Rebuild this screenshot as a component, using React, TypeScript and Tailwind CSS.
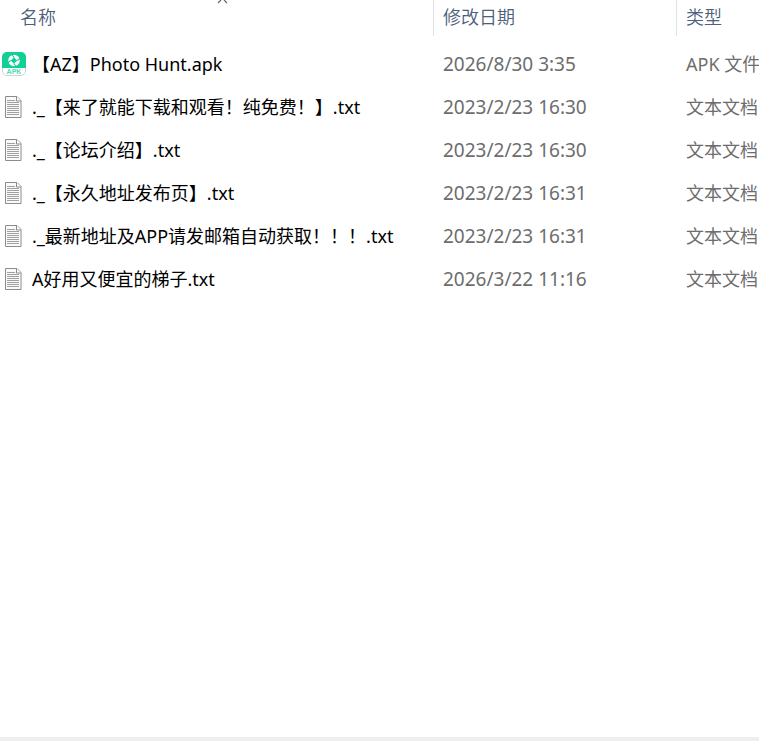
import type { ReactNode } from 'react';

interface FileEntry {
  name: string;
  modified: string;
  type: string;
  kind: 'apk' | 'txt';
}

const files: FileEntry[] = [
  { name: '【AZ】Photo Hunt.apk', modified: '2026/8/30 3:35', type: 'APK 文件', kind: 'apk' },
  { name: '._【来了就能下载和观看！纯免费！】.txt', modified: '2023/2/23 16:30', type: '文本文档', kind: 'txt' },
  { name: '._【论坛介绍】.txt', modified: '2023/2/23 16:30', type: '文本文档', kind: 'txt' },
  { name: '._【永久地址发布页】.txt', modified: '2023/2/23 16:31', type: '文本文档', kind: 'txt' },
  { name: '._最新地址及APP请发邮箱自动获取！！！.txt', modified: '2023/2/23 16:31', type: '文本文档', kind: 'txt' },
  { name: 'A好用又便宜的梯子.txt', modified: '2026/3/22 11:16', type: '文本文档', kind: 'txt' },
];

function ApkIcon() {
  return (
    <svg width="24" height="24" viewBox="0 0 24 24" className="shrink-0" aria-hidden="true">
      <rect x="0.5" y="0.5" width="23" height="23" rx="4.5" fill="#fff" stroke="#c9d6d1" />
      <path d="M5 0h14a5 5 0 0 1 5 5v11H0V5a5 5 0 0 1 5-5z" fill="#12cf96" />
      <circle cx="12" cy="8.5" r="5.8" fill="#fff" />
      <path d="M12 4.8l1.5 2.2 2.2 1.5-2.2 1.5L12 12.2l-1.5-2.2L8.3 8.5l2.2-1.5z" fill="#12cf96" />
      <path d="M12 5L9.5 2.2M15.5 8.5l2.8-2.5M12 12l2.5 2.8M8.5 8.5l-2.8 2.5" stroke="#12cf96" strokeWidth="1.1" />
      <text x="12" y="22" textAnchor="middle" fontSize="7" fontWeight="700" fill="#4fdab2" fontFamily="Liberation Sans, sans-serif">
        APK
      </text>
    </svg>
  );
}

function TextIcon() {
  return (
    <svg width="18" height="22" viewBox="0 0 18 22" className="mr-1 ml-[2px] shrink-0" aria-hidden="true">
      <path d="M1.5 0.5h11.500l4 4v17h-15.500z" fill="#fafafa" stroke="#8c8c8c" />
      <path d="M12.5 0.5v4.500h4.500" fill="#fff" stroke="#8c8c8c" />
      <path
        d="M3 4.5h8M3 6.5h12M3 8.5h12M3 10.5h12M3 12.5h12M3 14.5h12M3 16.5h12M3 18.5h12"
        stroke="#a0a0a0"
      />
    </svg>
  );
}

function HeaderCell({ children, divider, className }: { children: ReactNode; divider?: boolean; className: string }) {
  return (
    <th scope="col" className="h-[42px] p-0 text-left align-top font-[350] text-[#4c607a]">
      <div className={`relative flex h-9 pt-[5px] ${divider ? 'border-r border-[#e2e2e2]' : ''} ${className}`}>{children}</div>
    </th>
  );
}

export default function App() {
  return (
    <main className="flex min-h-screen flex-col overflow-hidden bg-white font-['Noto_Sans','Noto_Sans_CJK_SC',sans-serif] text-[18px] leading-6">
      <table className="w-full table-fixed border-collapse whitespace-nowrap">
        <colgroup>
          <col className="w-[434px]" />
          <col className="w-[243px]" />
          <col />
        </colgroup>
        <thead>
          <tr>
            <HeaderCell divider className="pl-5">
              名称
              {/* ascending sort marker */}
              <svg width="12" height="4" viewBox="0 0 12 4" className="absolute top-0 left-1/2" aria-hidden="true">
                <path d="M1 3L4 0M10 3L7 0" fill="none" stroke="#666" strokeWidth="1.2" />
              </svg>
            </HeaderCell>
            <HeaderCell divider className="pl-[9px]">修改日期</HeaderCell>
            <HeaderCell className="pl-[9px]">类型</HeaderCell>
          </tr>
        </thead>
        <tbody>
          {files.map((file) => (
            <tr key={file.name} className="h-[43px]">
              <td className="p-0 text-black">
                <div className="flex items-center gap-[6px] pl-[2px]">
                  {file.kind === 'apk' ? <ApkIcon /> : <TextIcon />}
                  <span>{file.name}</span>
                </div>
              </td>
              <td className="p-0 pl-[9px] text-[19px] text-[#6d6d6d]">{file.modified}</td>
              <td className="overflow-hidden p-0 pl-[9px] text-[#6d6d6d]">{file.type}</td>
            </tr>
          ))}
        </tbody>
      </table>
      <div className="mt-auto h-1 bg-[#eeeeee]" />
    </main>
  );
}
